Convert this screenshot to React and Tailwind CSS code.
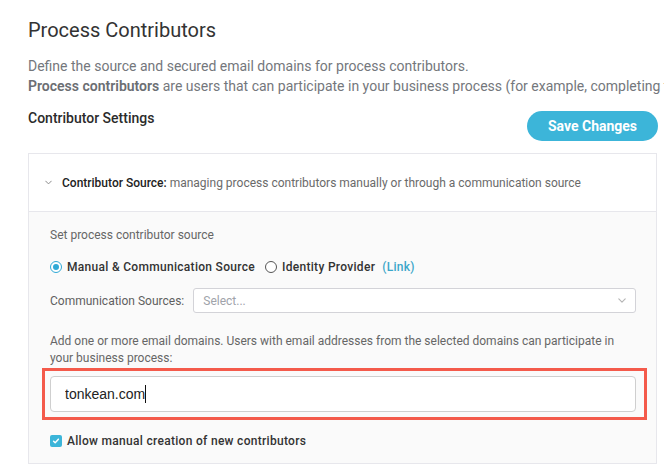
import { useState } from "react";

const FONT = "font-['Roboto','Liberation_Sans',sans-serif]";

function Chevron({ className }) {
  return (
    <svg viewBox="0 0 10 6" className={className} fill="none" stroke="currentColor" strokeWidth="1.4" strokeLinecap="round" strokeLinejoin="round">
      <path d="M1 1l4 4 4-4" />
    </svg>
  );
}

function Radio({ checked, label, onClick }) {
  return (
    <button onClick={onClick} className="flex items-center gap-[5px]">
      {checked ? (
        <span className="w-[12px] h-[12px] rounded-full border-[1.5px] border-[#2fa9d6] bg-white flex items-center justify-center">
          <span className="w-[6px] h-[6px] rounded-full bg-[#2fa9d6]" />
        </span>
      ) : (
        <span className="w-[12px] h-[12px] rounded-full border border-[#555] bg-white" />
      )}
      <span className="text-[12px] leading-[16px] font-medium tracking-[0.3px] text-[#333]">{label}</span>
    </button>
  );
}

export default function App() {
  const [source, setSource] = useState("manual");
  const [domain, setDomain] = useState("tonkean.com");
  const [allowManual, setAllowManual] = useState(true);

  return (
    <div className={`${FONT} bg-white w-[664px] h-[476px] overflow-hidden`}>
      <div className="ml-[28px] w-[630px] pt-[18px]">
        <h1 className="text-[20px] leading-[24px] text-[#333]">Process Contributors</h1>

        <div className="mt-[14px] text-[14px] leading-[20px] text-[#74777c] whitespace-nowrap">
          <p>Define the source and secured email domains for process contributors.</p>
          <p>
            <span className="font-semibold text-[#6b6e73]">Process contributors</span> are users that can
            participate in your business process (for example, completing tasks or approving requests).
          </p>
        </div>

        <div className="mt-[12px] flex items-start justify-between">
          <h2 className="text-[14px] leading-[20px] font-medium text-[#2b2b2b]">Contributor Settings</h2>
          <button className="mt-[3px] h-[30px] w-[131px] rounded-full bg-[#3cb5d9] text-white text-[14px] font-bold">
            Save Changes
          </button>
        </div>

        <div className="mt-[12px] mr-[1px] border border-[#e7e7ec]">
          <div className="h-[58px] border-b border-[#e7e7ec] bg-white flex items-center pl-[16px] gap-[10px]">
            <Chevron className="w-[7px] h-[5px] text-[#888]" />
            <p className="text-[12px] text-[#6a6a6a]">
              <span className="font-medium text-[#222]">Contributor Source:</span> managing process
              contributors manually or through a communication source
            </p>
          </div>

          <div className="bg-[#fafafa] pl-[21px] pr-[20px] pt-[15px] pb-[14px]">
            <p className="text-[12px] leading-[16px] text-[#666]">Set process contributor source</p>

            <div className="mt-[16px] flex items-center gap-[10px]">
              <Radio checked={source === "manual"} label="Manual & Communication Source" onClick={() => setSource("manual")} />
              <div className="flex items-center gap-[7px]">
                <Radio checked={source === "idp"} label="Identity Provider" onClick={() => setSource("idp")} />
                <a className="text-[12px] leading-[16px] font-medium tracking-[0.3px] text-[#3aa6c9]">(Link)</a>
              </div>
            </div>

            <div className="mt-[13px] flex items-center gap-[9px]">
              <span className="text-[12px] text-[#5f5f5f] whitespace-nowrap">Communication Sources:</span>
              <div className="flex-1 h-[25px] bg-white border border-[#d3d3d8] rounded-[3px] flex items-center justify-between pl-[9px] pr-[9px]">
                <span className="text-[12px] text-[#a0a3aa]">Select...</span>
                <Chevron className="w-[8px] h-[5px] text-[#b5b5b5]" />
              </div>
            </div>

            <p className="mt-[20px] text-[12px] leading-[17px] text-[#666] pr-[6px]">
              Add one or more email domains. Users with email addresses from the selected domains can participate in
              your business process:
            </p>

            <div className="mt-[1px] -ml-[8px] -mr-[11px] border-[3px] border-[#f45a4b] pl-[5px] pr-[8px] py-[5px]">
              <div className="h-[36px] bg-white border border-[#cfcfcf] rounded-[4px] flex items-center pl-[14px]">
                <input
                  value={domain}
                  onChange={(e) => setDomain(e.target.value)}
                  size={domain.length}
                  className="font-['Liberation_Sans',sans-serif] text-[14px] text-[#222] bg-transparent outline-none w-auto"
                  style={{ width: `${domain.length * 7.3}px` }}
                />
                <span className="w-px h-[18px] bg-[#111]" />
              </div>
            </div>

            <button onClick={() => setAllowManual(!allowManual)} className="mt-[13px] flex items-center gap-[5px]">
              <span className={`w-[12px] h-[12px] rounded-[2px] flex items-center justify-center ${allowManual ? "bg-[#3cb5d9]" : "bg-white border border-[#999]"}`}>
                {allowManual && (
                  <svg viewBox="0 0 10 10" className="w-[8px] h-[8px]" fill="none" stroke="white" strokeWidth="1.8" strokeLinecap="round" strokeLinejoin="round">
                    <path d="M2 5.2l2 2 4-4.5" />
                  </svg>
                )}
              </span>
              <span className="text-[12px] leading-[16px] font-medium tracking-[0.3px] text-[#333]">Allow manual creation of new contributors</span>
            </button>
          </div>
        </div>
      </div>
    </div>
  );
}
